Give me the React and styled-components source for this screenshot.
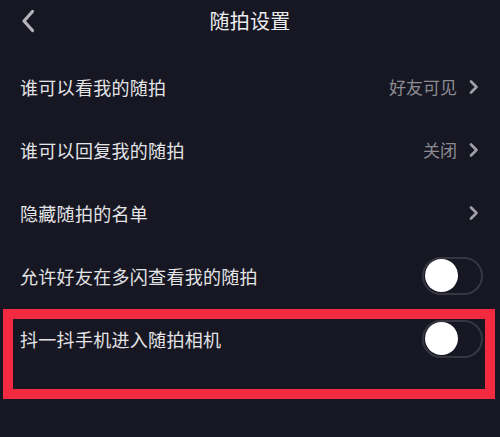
import styled, { createGlobalStyle } from "styled-components";

const Global = createGlobalStyle`
  html, body {
    margin: 0;
    padding: 0;
    background: #161722;
  }
  body {
    font-family: "Noto Sans CJK SC", "Noto Sans", sans-serif;
  }
`;

const Page = styled.div`
  position: relative;
  width: 500px;
  height: 437px;
  background: #161722;
  overflow: hidden;
`;

const Header = styled.div`
  position: relative;
  display: flex;
  align-items: center;
  justify-content: center;
  height: 42px;
`;

const BackButton = styled.div`
  position: absolute;
  left: 20px;
  top: 8px;
  width: 18px;
  height: 26px;
  display: flex;
  align-items: center;
`;

const Title = styled.div`
  color: #ececee;
  font-size: 20px;
  line-height: 1;
  letter-spacing: 0.3px;
`;

const List = styled.div`
  display: flex;
  flex-direction: column;
  padding-top: 13px;
`;

const Row = styled.div`
  display: flex;
  align-items: center;
  justify-content: space-between;
  height: 63px;
  padding: 0 21px 0 20px;
`;

const Label = styled.div`
  color: #e4e4e7;
  font-size: 18px;
  letter-spacing: 0.3px;
  line-height: 1;
`;

const Right = styled.div`
  display: flex;
  align-items: center;
  gap: 12px;
`;

const Value = styled.div`
  color: #8c8c92;
  font-size: 17px;
  line-height: 1;
`;

const Track = styled.div`
  box-sizing: border-box;
  width: 61px;
  height: 38px;
  border-radius: 19px;
  border: 2px solid #353640;
  padding: 1px;
  display: flex;
  align-items: center;
  margin-right: -4px;
`;

const Knob = styled.div`
  width: 33px;
  height: 33px;
  border-radius: 50%;
  background: #ffffff;
`;

const Highlight = styled.div`
  position: absolute;
  left: 3px;
  top: 309px;
  width: 492px;
  height: 90px;
  box-sizing: border-box;
  border: 10px solid #f42a41;
  pointer-events: none;
`;

const Chevron = () => (
  <svg width="10" height="14" viewBox="0 0 10 14">
    <path d="M2 1.5 L7.5 7 L2 12.5" fill="none" stroke="#a0a0a6" strokeWidth="2.6" strokeLinecap="round" strokeLinejoin="round" />
  </svg>
);

const Toggle = () => (
  <Track>
    <Knob />
  </Track>
);

const rows = [
  { label: "谁可以看我的随拍", value: "好友可见", type: "link" },
  { label: "谁可以回复我的随拍", value: "关闭", type: "link" },
  { label: "隐藏随拍的名单", type: "link" },
  { label: "允许好友在多闪查看我的随拍", type: "toggle" },
  { label: "抖一抖手机进入随拍相机", type: "toggle" },
];

export default function App() {
  return (
    <Page>
      <Global />
      <Header>
        <BackButton>
          <svg width="16" height="24" viewBox="0 0 16 24">
            <path d="M12.5 2.5 L4 12 L12.5 21.5" fill="none" stroke="#b4b4ba" strokeWidth="3.2" strokeLinecap="round" strokeLinejoin="round" />
          </svg>
        </BackButton>
        <Title>随拍设置</Title>
      </Header>
      <List>
        {rows.map((r) => (
          <Row key={r.label}>
            <Label>{r.label}</Label>
            {r.type === "link" ? (
              <Right>
                {r.value && <Value>{r.value}</Value>}
                <Chevron />
              </Right>
            ) : (
              <Toggle />
            )}
          </Row>
        ))}
      </List>
      <Highlight />
    </Page>
  );
}
